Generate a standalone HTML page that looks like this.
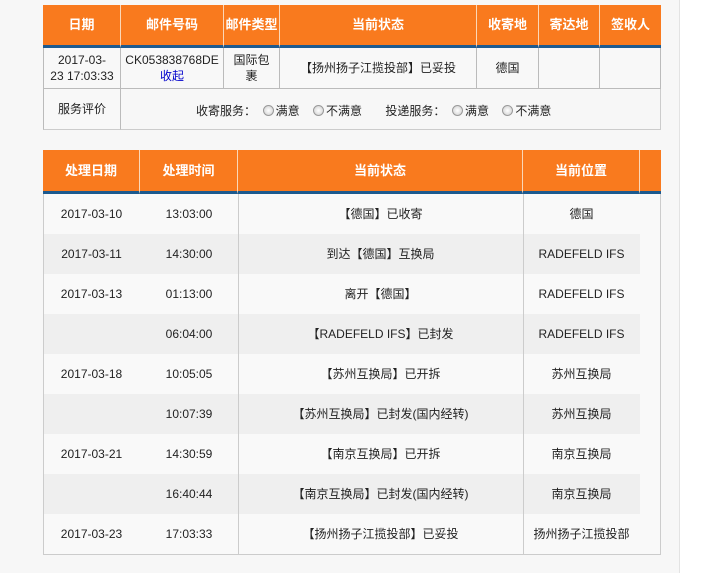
<!DOCTYPE html>
<html><head><meta charset="utf-8"><style>
*{margin:0;padding:0;box-sizing:border-box}
body{width:701px;height:573px;background:#fff;font-family:"Liberation Sans","Noto Sans CJK SC",sans-serif;font-size:12px;color:#222;position:relative;overflow:hidden}
.bg{position:absolute;left:0;top:0;width:680px;height:573px;background:#f7f7f7;border-right:1px solid #e3e3e3}
.a{position:absolute;display:flex;align-items:center;justify-content:center;text-align:center;line-height:16px;white-space:nowrap}
.h{background:#f97a1e;color:#fff;font-weight:bold;font-size:13px;border-right:1px solid #fbd7b8;border-bottom:3px solid #1d5a8f}
.c{border-right:1px solid #bbb;border-bottom:1px solid #bbb;background:#f8f8f8}
.r{display:inline-block;width:11px;height:11px;border-radius:50%;border:1px solid #999;background:radial-gradient(#fff,#ccc);vertical-align:-1px;margin-right:2px}
</style></head><body><div class="bg"></div>
<div class="a h" style="left:43px;top:5px;width:78px;height:43px">日期</div>
<div class="a h" style="left:121px;top:5px;width:103px;height:43px">邮件号码</div>
<div class="a h" style="left:224px;top:5px;width:56px;height:43px">邮件类型</div>
<div class="a h" style="left:280px;top:5px;width:197px;height:43px">当前状态</div>
<div class="a h" style="left:477px;top:5px;width:62px;height:43px">收寄地</div>
<div class="a h" style="left:539px;top:5px;width:61px;height:43px">寄达地</div>
<div class="a h" style="left:600px;top:5px;width:61px;height:43px;border-right:none">签收人</div>
<div class="a c" style="left:43px;top:48px;width:78px;height:41px;border-left:1px solid #bbb"><div>2017-03-<br>23 17:03:33</div></div>
<div class="a c" style="left:121px;top:48px;width:103px;height:41px"><div>CK053838768DE<br><span style="color:#00c">收起</span></div></div>
<div class="a c" style="left:224px;top:48px;width:56px;height:41px"><div>国际包<br>裹</div></div>
<div class="a c" style="left:280px;top:48px;width:197px;height:41px">【扬州扬子江揽投部】已妥投</div>
<div class="a c" style="left:477px;top:48px;width:62px;height:41px">德国</div>
<div class="a c" style="left:539px;top:48px;width:61px;height:41px"></div>
<div class="a c" style="left:600px;top:48px;width:61px;height:41px"></div>
<div class="a c" style="left:43px;top:89px;width:78px;height:41px;border-left:1px solid #bbb;border-bottom-color:#ccc">服务评价</div>
<div class="a" style="left:121px;top:89px;width:540px;height:41px;border-right:1px solid #ccc;border-bottom:1px solid #ccc;justify-content:flex-start;padding-left:75px;padding-top:3px"><div>收寄服务：&nbsp;&nbsp;<span class="r"></span>满意&nbsp;&nbsp;&nbsp;&nbsp;<span class="r"></span>不满意&nbsp;&nbsp;&nbsp;&nbsp;&nbsp;&nbsp;&nbsp;投递服务：&nbsp;&nbsp;<span class="r"></span>满意&nbsp;&nbsp;&nbsp;&nbsp;<span class="r"></span>不满意</div></div>

<div class="a h" style="left:43px;top:150px;width:97px;height:44px">处理日期</div>
<div class="a h" style="left:140px;top:150px;width:98px;height:44px">处理时间</div>
<div class="a h" style="left:238px;top:150px;width:285px;height:44px">当前状态</div>
<div class="a h" style="left:523px;top:150px;width:117px;height:44px">当前位置</div>
<div class="a h" style="left:640px;top:150px;width:21px;height:44px;border-right:none"></div>
<div style="position:absolute;left:43px;top:194px;width:618px;height:361px;border:1px solid #ccc;border-top:none;background:#f9f9f9"></div>
<div id="rows"></div>
<div style="position:absolute;left:238px;top:194px;width:1px;height:360px;background:#ccc"></div>
<div style="position:absolute;left:523px;top:194px;width:1px;height:360px;background:#ccc"></div>
<script>
var d=[["2017-03-10","13:03:00","【德国】已收寄","德国"],["2017-03-11","14:30:00","到达【德国】互换局","RADEFELD IFS"],["2017-03-13","01:13:00","离开【德国】","RADEFELD IFS"],["","06:04:00","【RADEFELD IFS】已封发","RADEFELD IFS"],["2017-03-18","10:05:05","【苏州互换局】已开拆","苏州互换局"],["","10:07:39","【苏州互换局】已封发(国内经转)","苏州互换局"],["2017-03-21","14:30:59","【南京互换局】已开拆","南京互换局"],["","16:40:44","【南京互换局】已封发(国内经转)","南京互换局"],["2017-03-23","17:03:33","【扬州扬子江揽投部】已妥投","扬州扬子江揽投部"]];
var h="";d.forEach(function(r,i){var t=194+i*40;var bg=i%2?"background:#efefef;":"";
h+='<div style="position:absolute;left:44px;top:'+t+'px;width:596px;height:40px;'+bg+'"></div>';
var xs=[[43,97],[140,98],[238,285],[523,117]];
xs.forEach(function(x,j){h+='<div class="a" style="left:'+x[0]+'px;top:'+t+'px;width:'+x[1]+'px;height:40px">'+r[j]+'</div>';});});
document.getElementById("rows").innerHTML=h;
</script>
</body></html>
